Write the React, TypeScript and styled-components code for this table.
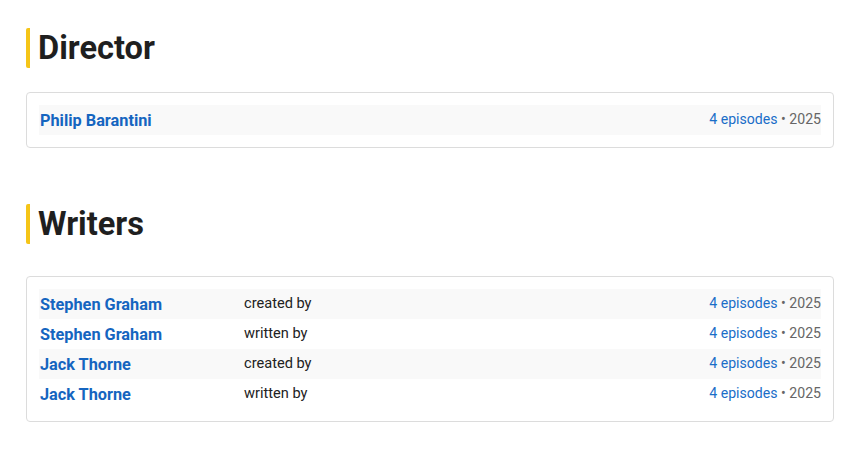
import React from "react";
import styled, { createGlobalStyle } from "styled-components";

const GlobalStyle = createGlobalStyle`
  html, body { margin: 0; padding: 0; background: #ffffff; }
  body { font-family: Roboto, "Liberation Sans", Arial, sans-serif; color: #222; }
`;

const Page = styled.main`
  padding: 28px 25px 0 26px;
`;

const Section = styled.section<{ $gap: number; $top?: number }>`
  display: flex;
  flex-direction: column;
  gap: ${(p) => p.$gap}px;
  margin-top: ${(p) => p.$top ?? 0}px;
`;

const Heading = styled.h2`
  margin: 0;
  border-left: 4px solid #f5c518;
  border-radius: 2px;
  padding-left: 8px;
  font-size: 32.6px;
  line-height: 40px;
  font-weight: 700;
  color: #1f1f1f;
`;

const Card = styled.div`
  border: 1px solid #dcdcdc;
  border-radius: 4px;
  padding: 12px;
  display: flex;
  flex-direction: column;
`;

const Row = styled.div<{ $alt: boolean }>`
  display: grid;
  grid-template-columns: 205px 1fr auto;
  align-items: center;
  height: 30px;
  background: ${(p) => (p.$alt ? "#f9f9f9" : "transparent")};
`;

const Name = styled.a`
  font-size: 16.3px;
  font-weight: 700;
  color: #1565c0;
  text-decoration: none;
  padding-left: 1px;
`;

const Role = styled.span`
  font-size: 14.6px;
  color: #222;
  margin-top: -2px;
`;

const Meta = styled.span`
  font-size: 14.1px;
  color: #666;
  white-space: nowrap;
  margin-top: -2px;
`;

const Episodes = styled.a`
  color: #1a6ec8;
  text-decoration: none;
`;

type Credit = { name: string; role?: string };

const director: Credit[] = [{ name: "Philip Barantini" }];
const writers: Credit[] = [
  { name: "Stephen Graham", role: "created by" },
  { name: "Stephen Graham", role: "written by" },
  { name: "Jack Thorne", role: "created by" },
  { name: "Jack Thorne", role: "written by" },
];

const CreditList = ({ items }: { items: Credit[] }) => (
  <Card>
    {items.map((c, i) => (
      <Row key={i} $alt={i % 2 === 0}>
        <Name href="#">{c.name}</Name>
        <Role>{c.role ?? ""}</Role>
        <Meta>
          <Episodes href="#">4 episodes</Episodes> • 2025
        </Meta>
      </Row>
    ))}
  </Card>
);

export default function App() {
  return (
    <>
      <GlobalStyle />
      <Page>
        <Section $gap={24}>
          <Heading>Director</Heading>
          <CreditList items={director} />
        </Section>
        <Section $gap={32} $top={56}>
          <Heading>Writers</Heading>
          <CreditList items={writers} />
        </Section>
      </Page>
    </>
  );
}
